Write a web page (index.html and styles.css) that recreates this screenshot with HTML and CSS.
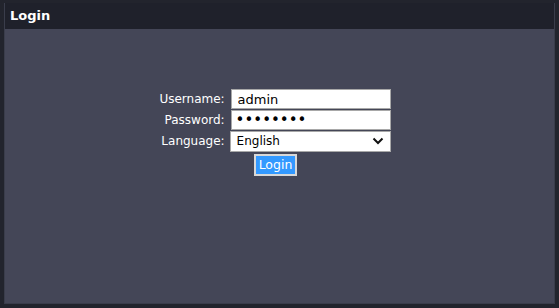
FILE: index.html
```html
<!DOCTYPE html>
<html lang="en">
<head>
    <meta charset="UTF-8">
    <meta name="viewport" content="width=device-width, initial-scale=1.0">
    <title>Login</title>
    <link rel="stylesheet" href="styles.css">
</head>
<body>
    <div class="panel">
        <div class="panel-header">Login</div>
        <div class="panel-body">
            <form class="login-form">
                <div class="fields">
                    <label for="username">Username:</label>
                    <input type="text" id="username" value="admin">
                    <label for="password">Password:</label>
                    <input type="password" id="password" value="password">
                    <label for="language">Language:</label>
                    <div class="select-wrap">
                        <select id="language">
                            <option>English</option>
                        </select>
                        <svg class="chevron" width="12" height="8" viewBox="0 0 12 8"><path d="M1.5 1.5 L6 6 L10.5 1.5" fill="none" stroke="#111" stroke-width="2"/></svg>
                    </div>
                </div>
                <button type="submit">Login</button>
            </form>
        </div>
    </div>
</body>
</html>
```

FILE: styles.css
```css
body {
    margin: 0;
    background-color: #22242d;
    font-family: "DejaVu Sans", Verdana, sans-serif;
    width: 559px;
    height: 308px;
    padding: 3px 4px 4px 4px;
    box-sizing: border-box;
}
.panel {
    height: 100%;
    display: flex;
    flex-direction: column;
    border: 1px solid #3a3d4b;
    border-top: none;
    box-sizing: border-box;
}
.panel-header {
    background-color: #1f212b;
    color: #fff;
    font-weight: bold;
    font-size: 13px;
    height: 26px;
    line-height: 26px;
    padding-left: 5px;
}
.panel-body {
    flex: 1;
    background-color: #444657;
    display: flex;
    justify-content: center;
    padding-top: 60px;
    padding-right: 8px;
}
.login-form {
    display: flex;
    flex-direction: column;
    align-items: center;
}
.fields {
    display: grid;
    grid-template-columns: auto 161px;
    column-gap: 6px;
    row-gap: 1px;
    align-items: center;
}
label {
    color: #fff;
    font-size: 12px;
    text-align: right;
}
input, select {
    font-family: "DejaVu Sans", Verdana, sans-serif;
    font-size: 13px;
    height: 20px;
    border: 1px solid #a8a8a8;
    background: #fff;
    color: #000;
    box-sizing: border-box;
    padding: 0 6px;
    width: 160px;
    outline: none;
}
input[type="password"] {
    font-size: 15px;
    padding: 0 4px;
}
.select-wrap {
    position: relative;
    margin-top: -1px;
}
select {
    appearance: none;
    width: 161px;
    height: 21px;
    font-size: 12px;
    margin-left: -1px;
}
.chevron {
    position: absolute;
    right: 8px;
    top: 7px;
}
button {
    margin-top: 2px;
    background-color: #3399ff;
    color: #fff;
    font-family: "DejaVu Sans", Verdana, sans-serif;
    font-size: 12.5px;
    border: 2px solid #d8d8d8;
    padding: 1px 3px;
    height: 22px;
}
```
